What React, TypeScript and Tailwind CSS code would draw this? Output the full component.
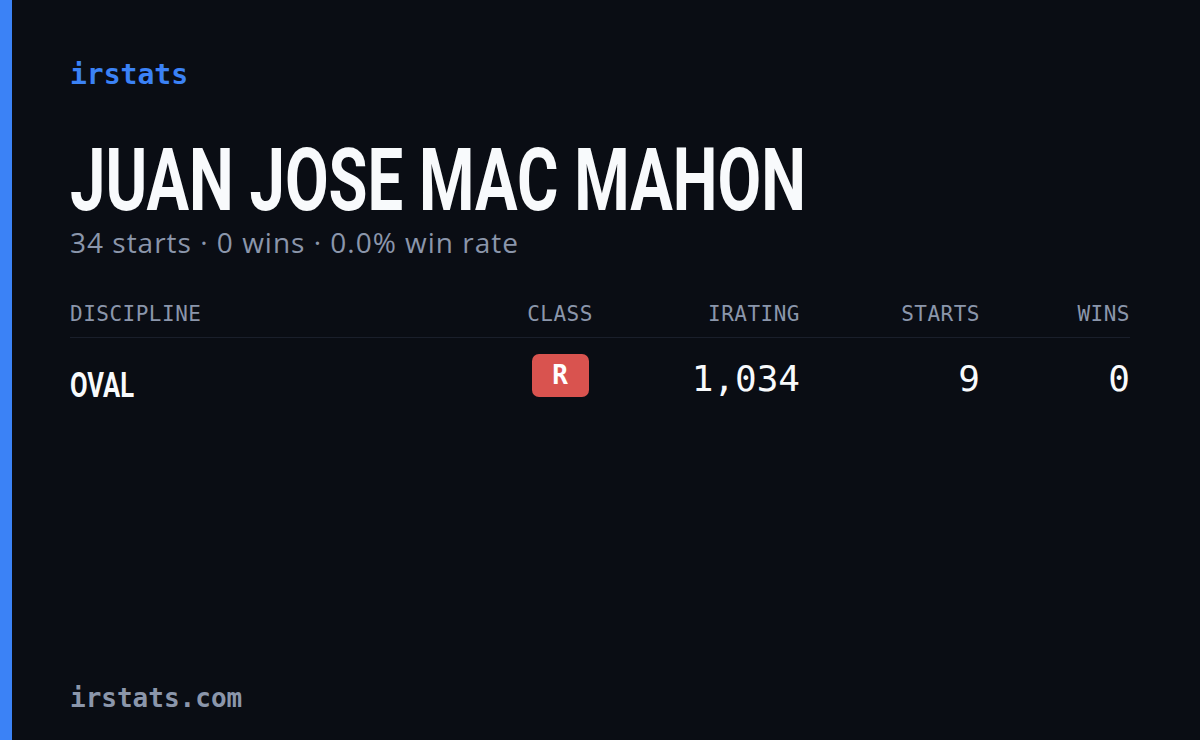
const mono = "font-['DejaVu_Sans_Mono','Liberation_Mono',monospace]"
const cond = "font-['Roboto','Liberation_Sans',sans-serif]"

interface Row {
  discipline: string
  cls: string
  irating: string
  starts: string
  wins: string
}

const rows: Row[] = [{ discipline: 'OVAL', cls: 'R', irating: '1,034', starts: '9', wins: '0' }]

export default function App() {
  return (
    <div className="flex h-[740px] w-[1200px] bg-[#0a0d14]">
      <div className="w-[12px] bg-[#3b82f6]" />
      <div className="flex flex-1 flex-col pl-[58px] pr-[70px] pt-[57px] pb-[26px]">
        <div className={`${mono} text-[28px] font-semibold leading-[36px] text-[#3b82f6]`}>irstats</div>

        <h1 className={`${cond} mt-[54px] whitespace-nowrap text-[88px] font-bold leading-[66px] text-[#f8fafc]`}>
          <span className="inline-block origin-left scale-x-[0.72]">JUAN JOSE MAC MAHON</span>
        </h1>
        <div className="mt-[11px] font-['Open_Sans',sans-serif] text-[28px] leading-[36px] tracking-[1px] text-[#8b96ab]">
          34 starts · 0 wins · 0.0% win rate
        </div>

        <div className="mt-[40px]">
          <div className={`${mono} grid grid-cols-[1fr_130px_175px_180px_150px] border-b border-[#1a1f2b] pb-[9px] text-[21px] font-medium leading-[28px] tracking-[0.5px] text-[#8b96ab]`}>
            <div>DISCIPLINE</div>
            <div className="text-center">CLASS</div>
            <div className="text-right">IRATING</div>
            <div className="text-right">STARTS</div>
            <div className="text-right">WINS</div>
          </div>
          {rows.map(r => (
            <div key={r.discipline} className="grid grid-cols-[1fr_130px_175px_180px_150px] items-start pt-[16px]">
              <div className={`${cond} pt-[10px] text-[35px] font-bold leading-[44px] text-[#f8fafc]`}>
                <span className="inline-block origin-left scale-x-[0.73]">{r.discipline}</span>
              </div>
              <div className="flex justify-center">
                <span className={`${mono} flex h-[43px] w-[57px] items-center justify-center rounded-[7px] bg-[#d9534f] text-[26px] font-bold text-white`}>
                  {r.cls}
                </span>
              </div>
              <div className={`${mono} pt-[3px] text-right text-[36px] leading-[44px] text-[#f8fafc]`}>{r.irating}</div>
              <div className={`${mono} pt-[3px] text-right text-[36px] leading-[44px] text-[#f8fafc]`}>{r.starts}</div>
              <div className={`${mono} pt-[3px] text-right text-[36px] leading-[44px] text-[#f8fafc]`}>{r.wins}</div>
            </div>
          ))}
        </div>

        <div className={`${mono} mt-auto text-[26px] font-bold leading-[32px] text-[#8b96ab]`}>irstats.com</div>
      </div>
    </div>
  )
}
